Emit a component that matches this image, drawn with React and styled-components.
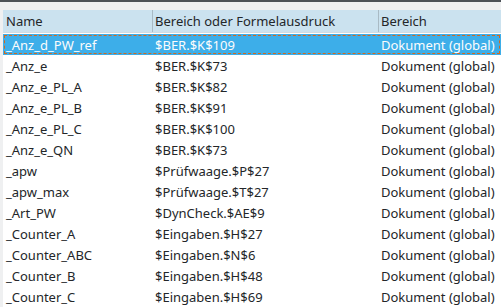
import React from 'react';
import styled, { createGlobalStyle } from 'styled-components';

const GlobalStyle = createGlobalStyle`
    html, body {
        margin: 0;
        padding: 0;
        background: #eff0f1;
        overflow: hidden;
    }
    body {
        font-family: "Noto Sans", "DejaVu Sans", sans-serif;
        font-size: 13px;
        color: #232629;
    }
`;

const Window = styled.div`
    width: 501px;
    height: 307px;
    display: flex;
    flex-direction: column;
    border-top: 2px solid #4d5257;
    box-sizing: border-box;
    padding-top: 8px;
    padding-left: 3px;
`;

const Table = styled.div`
    flex: 1;
    background: #ffffff;
    display: flex;
    flex-direction: column;
    overflow: hidden;
`;

const columns = '149px 226px 1fr';

const HeaderRow = styled.div`
    display: grid;
    grid-template-columns: ${columns};
    height: 22px;
    background: #cbe2ef;
    border-bottom: 1px solid #d3dbe0;
    margin-bottom: 1px;
`;

const HeaderCell = styled.div`
    display: flex;
    align-items: center;
    padding-left: ${p => (p.$first ? '3px' : '2px')};
    border-left: ${p => (p.$first ? 'none' : '1px solid #a9bac4')};
    white-space: nowrap;
    overflow: hidden;
`;

const Row = styled.div`
    display: grid;
    grid-template-columns: ${columns};
    height: 21px;
    flex-shrink: 0;
    position: relative;
    background: ${p => (p.$selected ? '#3daee9' : 'transparent')};
    color: ${p => (p.$selected ? '#fcfcfc' : '#232629')};
    ${p => p.$selected && `
        &::after {
            content: '';
            position: absolute;
            inset: 1px 1px 1px 1px;
            border: 1px dashed #d2691e;
            pointer-events: none;
        }
    `}
`;

const Cell = styled.div`
    display: flex;
    align-items: center;
    padding-left: 3px;
    white-space: nowrap;
    overflow: hidden;
`;

const names = [
    ['_Anz_d_PW_ref', '$BER.$K$109'],
    ['_Anz_e', '$BER.$K$73'],
    ['_Anz_e_PL_A', '$BER.$K$82'],
    ['_Anz_e_PL_B', '$BER.$K$91'],
    ['_Anz_e_PL_C', '$BER.$K$100'],
    ['_Anz_e_QN', '$BER.$K$73'],
    ['_apw', '$Prüfwaage.$P$27'],
    ['_apw_max', '$Prüfwaage.$T$27'],
    ['_Art_PW', '$DynCheck.$AE$9'],
    ['_Counter_A', '$Eingaben.$H$27'],
    ['_Counter_ABC', '$Eingaben.$N$6'],
    ['_Counter_B', '$Eingaben.$H$48'],
    ['_Counter_C', '$Eingaben.$H$69'],
];

export default function App() {
    return (
        <Window>
            <GlobalStyle />
            <Table>
                <HeaderRow>
                    <HeaderCell $first>Name</HeaderCell>
                    <HeaderCell>Bereich oder Formelausdruck</HeaderCell>
                    <HeaderCell>Bereich</HeaderCell>
                </HeaderRow>
                {names.map(([name, range], i) => (
                    <Row key={name} $selected={i === 0}>
                        <Cell>{name}</Cell>
                        <Cell>{range}</Cell>
                        <Cell>Dokument (global)</Cell>
                    </Row>
                ))}
            </Table>
        </Window>
    );
}
